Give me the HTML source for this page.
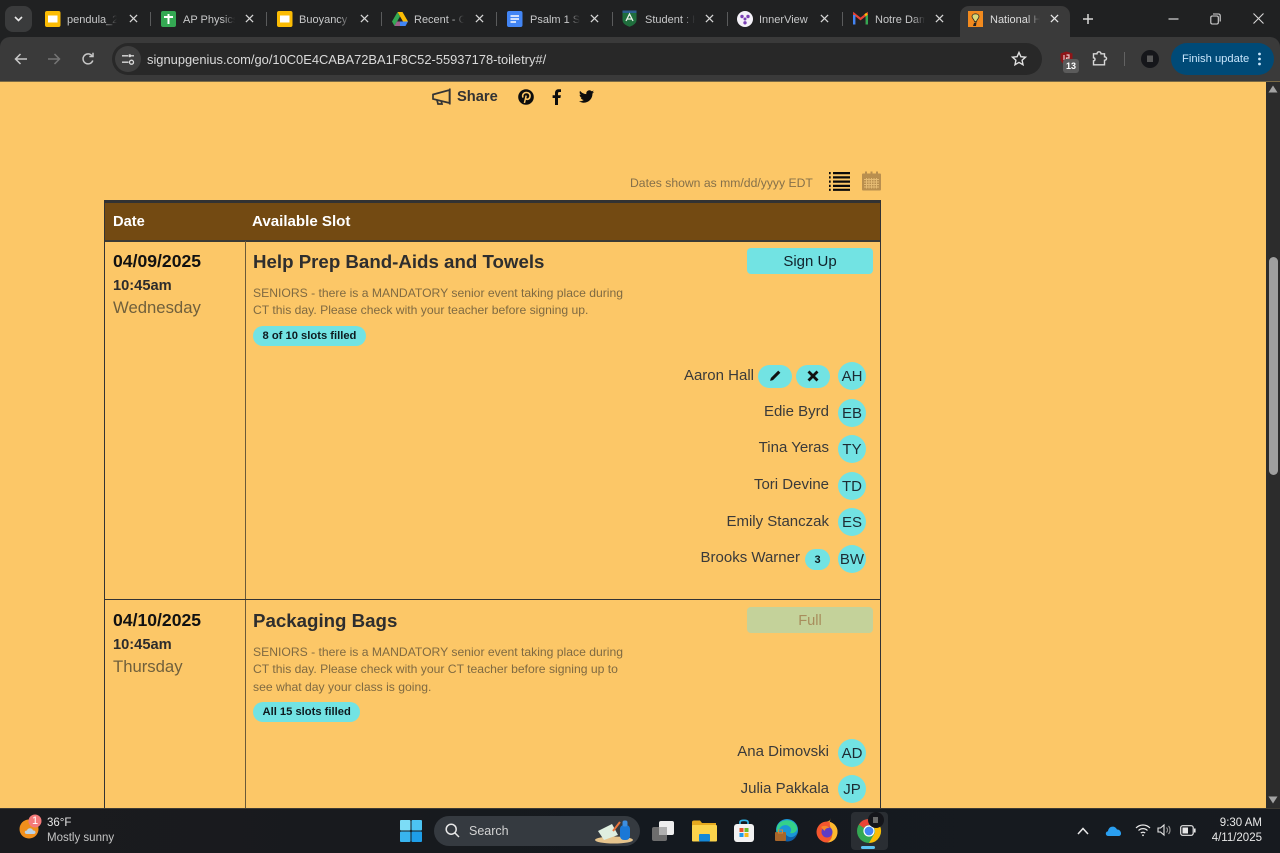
<!DOCTYPE html>
<html lang="en">
<head>
<meta charset="utf-8">
<title>National Honor Society - SignUpGenius</title>
<style>
html,body{margin:0;padding:0;width:1280px;height:853px;overflow:hidden;background:#fcc767;font-family:"Liberation Sans",Arial,sans-serif}
.a{position:absolute;white-space:nowrap}
svg{position:absolute;display:block;overflow:visible}
#top{position:absolute;left:0;top:0;width:1280px;height:50px;background:#202122}
#bar{position:absolute;left:0;top:37px;width:1280px;height:44px;background:#3a3a3a;border-radius:10px 10px 0 0}
#line{position:absolute;left:0;top:81px;width:1280px;height:1px;background:#7a6a45}
.tt{position:absolute;top:12px;font-size:11px;line-height:15px;padding-top:1px;color:#c8c9ca;white-space:nowrap;overflow:hidden;height:16px;-webkit-mask-image:linear-gradient(90deg,#000 75%,transparent 100%)}
.x{position:absolute;top:14px;width:9px;height:9px}
.sep{position:absolute;top:12px;width:1px;height:14px;background:#5a5b5c}
.nm{position:absolute;font-size:15px;line-height:18px;color:#3a3a3a;white-space:nowrap;right:451px}
.av{position:absolute;left:838px;width:28px;height:28px;border-radius:50%;background:#72e3e3;color:#1d2b33;font-size:15px;line-height:30px;text-align:center}
.v{position:absolute;background:#333}
.ddd{font-weight:bold;font-size:17.6px;line-height:22px;color:#111;position:absolute;left:113px}
.tm{font-weight:bold;font-size:14.67px;line-height:18px;color:#2c2c2c;position:absolute;left:113px}
.dy{font-size:16.7px;line-height:22px;color:#70603c;position:absolute;left:113px}
.h{font-weight:bold;font-size:18.7px;line-height:24px;color:#2e2e2e;position:absolute;left:253px;white-space:nowrap}
.d{font-size:12.17px;line-height:17.3px;color:#7f6a42;position:absolute;left:253px;white-space:nowrap}
.pill{position:absolute;left:253px;height:20px;border-radius:10px;background:#72e3e3;color:#0e1a1f;font-weight:bold;font-size:11.2px;line-height:20px;padding:0 9.5px;white-space:nowrap}
</style>
</head>
<body>

<!-- page content -->
<svg style="left:432px;top:88px" width="20" height="18" viewBox="0 0 20 18" fill="none" stroke="#333" stroke-width="1.7"><path d="M1 6.5 L17.5 2 V15 L1 11 Z M17.8 0.5 V16.5"/><path d="M5 12 L6 16 H10 L9.2 12.8"/></svg>
<div class="a" style="left:457px;top:88px;font-weight:bold;font-size:14.67px;line-height:18px;color:#333">Share</div>
<svg style="left:518px;top:89px" width="16" height="16" viewBox="0 0 16 16"><circle cx="8" cy="8" r="7.8" fill="#0d0d0d"/><path d="M6.4 14 L8.2 6.6" stroke="#fcc767" stroke-width="1.5" fill="none"/><path d="M5 8.6 C3.8 5.6 6 3.4 8.5 3.5 C11 3.6 12.4 5.2 12 7.6 C11.6 10.2 9.2 11 7.6 9.6" stroke="#fcc767" stroke-width="1.6" fill="none"/></svg>
<svg style="left:552px;top:89px" width="10" height="16" viewBox="0 0 10 16"><path d="M3 16 V9 H.6 V6.2 H3 V4 C3 1.5 4.500 .2 6.600 .2 H9 V3 H7.400 C6.400 3 6 3.500 6 4.400 V6.200 H8.900 L8.400 9 H6 V16 Z" fill="#0d0d0d"/></svg>
<svg style="left:579px;top:90px" width="15" height="13" viewBox="0 0 24 20"><path d="M24 2.400 C23.100 2.800 22.200 3.100 21.200 3.200 C22.200 2.600 23 1.600 23.400 .4 C22.400 1 21.300 1.400 20.200 1.600 C19.300 .6 18 0 16.600 0 C13.400 0 11.100 3 11.800 6.100 C7.700 5.900 4.100 3.900 1.700 .9 C.4 3.100 1 6 3.200 7.500 C2.400 7.500 1.600 7.300 1 6.900 C.9 9.200 2.600 11.400 5 11.900 C4.300 12.100 3.500 12.100 2.800 12 C3.400 14 5.300 15.400 7.500 15.500 C5.400 17.100 2.700 17.900 0 17.600 C2.200 19 4.900 19.900 7.500 19.900 C16.600 19.900 21.800 12.200 21.500 5.300 C22.500 4.500 23.300 3.500 24 2.400 Z" fill="#0d0d0d"/></svg>

<div class="a" style="left:630px;top:175px;font-size:12.2px;line-height:16px;color:#85704a">Dates shown as mm/dd/yyyy EDT</div>
<svg style="left:829px;top:171px" width="21" height="20" viewBox="0 0 21 20" fill="#0b0b0b"><path d="M0 1h1.700v2.200H0zM4 1h17v2.200H4zM0 5.300h1.700v2.200H0zM4 5.300h17v2.200H4zM0 9.500h1.700v2.200H0zM4 9.500h17v2.200H4zM0 13.800h1.700v2.200H0zM4 13.800h17v2.200H4zM0 17.700h1.700v2.200H0zM4 17.700h17v2.200H4z"/></svg>
<svg style="left:862px;top:171px" width="19" height="20" viewBox="0 0 19 20"><rect x="0" y="2.500" width="19" height="17" rx="1" fill="#b98f4f"/><rect x="3" y="0.500" width="2" height="3.500" fill="#b98f4f"/><rect x="8.500" y="0.500" width="2" height="3.500" fill="#b98f4f"/><rect x="14" y="0.500" width="2" height="3.500" fill="#b98f4f"/><path d="M2 8.500h15M2 11h15M2 13.500h15M2 16h15M4.500 7v10.500M7 7v10.500M9.500 7v10.500M12 7v10.500M14.500 7v10.500" stroke="#e5bb73" stroke-width="1" fill="none"/></svg>

<!-- table -->
<div class="a" style="left:104px;top:200px;width:777px;height:3px;background:#323232"></div>
<div class="a" style="left:105px;top:203px;width:776px;height:37px;background:#734a12"></div>
<div class="a" style="left:104px;top:240px;width:777px;height:2px;background:#3b3a35"></div>
<div class="a" style="left:113px;top:213px;font-weight:bold;font-size:14.67px;line-height:18px;color:#fff">Date</div>
<div class="a" style="left:252px;top:213px;font-weight:bold;font-size:15.1px;line-height:18px;color:#fff">Available Slot</div>
<div class="v" style="left:104px;top:203px;width:1px;height:606px"></div>
<div class="v" style="left:880px;top:203px;width:1px;height:606px"></div>
<div class="v" style="left:245px;top:241px;width:1px;height:568px;background:#6b5a38"></div>
<div class="v" style="left:104px;top:599px;width:777px;height:1px"></div>

<!-- row 1 -->
<div class="ddd" style="top:250px">04/09/2025</div>
<div class="tm" style="top:277px">10:45am</div>
<div class="dy" style="top:297px">Wednesday</div>
<div class="h" style="top:250px">Help Prep Band-Aids and Towels</div>
<div class="d" style="top:285px">SENIORS - there is a MANDATORY senior event taking place during<br>CT this day. Please check with your teacher before signing up.</div>
<div class="pill" style="top:326px">8 of 10 slots filled</div>
<div class="a" style="left:747px;top:248px;width:126px;height:26px;border-radius:4px;background:#72e3e3;color:#11222b;font-size:15px;line-height:28px;text-align:center">Sign Up</div>

<div class="nm" style="top:367px;right:526px">Aaron Hall</div>
<div class="a" style="left:758px;top:365px;width:34px;height:23px;border-radius:12px;background:#72e3e3"></div>
<svg style="left:769px;top:369px" width="13" height="13" viewBox="0 0 12 12"><path d="M1 11 L1.700 8.300 L8.500 1.500 L10.500 3.500 L3.700 10.300 Z" fill="#111"/></svg>
<div class="a" style="left:796px;top:365px;width:34px;height:23px;border-radius:12px;background:#72e3e3"></div>
<svg style="left:807px;top:370px" width="12" height="12" viewBox="0 0 12 12"><path d="M1.500 1.500 L10.500 10.500 M10.500 1.500 L1.500 10.500" stroke="#111" stroke-width="2.800"/></svg>
<div class="av" style="top:362px">AH</div>
<div class="nm" style="top:403px">Edie Byrd</div>
<div class="av" style="top:399px">EB</div>
<div class="nm" style="top:439px">Tina Yeras</div>
<div class="av" style="top:435px">TY</div>
<div class="nm" style="top:476px">Tori Devine</div>
<div class="av" style="top:472px">TD</div>
<div class="nm" style="top:513px">Emily Stanczak</div>
<div class="av" style="top:508px">ES</div>
<div class="nm" style="top:549px;right:480px">Brooks Warner</div>
<div class="a" style="left:805px;top:549px;width:25px;height:21px;border-radius:11px;background:#72e3e3;color:#0e1a1f;font-weight:bold;font-size:11px;line-height:23px;text-align:center">3</div>
<div class="av" style="top:545px">BW</div>

<!-- row 2 -->
<div class="ddd" style="top:609px">04/10/2025</div>
<div class="tm" style="top:636px">10:45am</div>
<div class="dy" style="top:656px">Thursday</div>
<div class="h" style="top:609px">Packaging Bags</div>
<div class="d" style="top:644px">SENIORS - there is a MANDATORY senior event taking place during<br>CT this day. Please check with your CT teacher before signing up to<br>see what day your class is going.</div>
<div class="pill" style="top:702px">All 15 slots filled</div>
<div class="a" style="left:747px;top:607px;width:126px;height:26px;border-radius:4px;background:#c4d29a;color:#a88d5c;font-size:14.67px;line-height:28px;text-align:center">Full</div>
<div class="nm" style="top:743px">Ana Dimovski</div>
<div class="av" style="top:739px">AD</div>
<div class="nm" style="top:780px">Julia Pakkala</div>
<div class="av" style="top:775px">JP</div>

<!-- scrollbar -->
<div class="a" style="left:1266px;top:82px;width:14px;height:727px;background:#2c2c2c"></div>
<svg style="left:1268px;top:85px" width="10" height="8" viewBox="0 0 10 8"><path d="M5 .5 L9.500 7.500 H.5 Z" fill="#a3a3a3"/></svg>
<svg style="left:1268px;top:796px" width="10" height="8" viewBox="0 0 10 8"><path d="M5 7.500 L9.500 .5 H.5 Z" fill="#a3a3a3"/></svg>
<div class="a" style="left:1269px;top:257px;width:9px;height:218px;border-radius:5px;background:#9f9f9f"></div>

<!-- chrome top -->
<div id="top"></div>
<div class="a" style="left:5px;top:6px;width:27px;height:26px;border-radius:8px;background:#3a3b3c"></div>
<svg style="left:14px;top:16px" width="9" height="6" viewBox="0 0 9 6"><path d="M1 1 L4.500 4.500 L8 1" stroke="#e8e8e8" stroke-width="1.600" fill="none"/></svg>

<!-- active tab -->
<div class="a" style="left:960px;top:6px;width:110px;height:32px;background:#3a3a3a;border-radius:9px 9px 0 0"></div>

<!-- tab icons -->
<svg style="left:45px;top:11px" width="16" height="16" viewBox="0 0 16 16"><rect width="15.500" height="16" rx="2" fill="#fbbc04"/><rect x="3" y="4.500" width="9.500" height="7" fill="#fff"/></svg>
<svg style="left:161px;top:11px" width="15" height="16" viewBox="0 0 15 16"><rect width="15" height="16" rx="2" fill="#34a853"/><path d="M3 6h9M7.500 3v10" stroke="#fff" stroke-width="2"/></svg>
<svg style="left:277px;top:11px" width="16" height="16" viewBox="0 0 16 16"><rect width="15.500" height="16" rx="2" fill="#fbbc04"/><rect x="3" y="4.500" width="9.500" height="7" fill="#fff"/></svg>
<svg style="left:392px;top:12px" width="16" height="14" viewBox="0 0 16 14"><path d="M5.500 0 H10.500 L16 9.500 H11 Z" fill="#fbbc04"/><path d="M5.500 0 L0 9.500 L2.500 14 L8 4.500 Z" fill="#34a853"/><path d="M2.500 14 H13.500 L16 9.500 H5 Z" fill="#4285f4"/><path d="M5 9.500 L2.500 14 H8 L8 9.500Z" fill="#ea4335" opacity=".55"/></svg>
<svg style="left:507px;top:11px" width="16" height="16" viewBox="0 0 16 16"><rect width="15.500" height="16" rx="2" fill="#4285f4"/><path d="M3.500 5h8.500M3.500 8h8.500M3.500 11h5.500" stroke="#fff" stroke-width="1.500"/></svg>
<svg style="left:622px;top:10px" width="15" height="17" viewBox="0 0 15 17"><path d="M.5 .5 H14.500 V10 C14.500 13.500 11 15.500 7.500 16.800 C4 15.500 .5 13.500 .5 10 Z" fill="#1f6e3d"/><path d="M.5 .5 H14.500 V3 H.5Z" fill="#2c5e8e"/><path d="M4 11 L7.500 4 L11 11 M5.500 9 H9.500" stroke="#e8f0e8" stroke-width="1.300" fill="none"/></svg>
<svg style="left:737px;top:11px" width="16" height="16" viewBox="0 0 16 16"><circle cx="8" cy="8" r="8" fill="#f4f1f8"/><circle cx="5" cy="5.500" r="1.700" fill="#7a3fb5"/><circle cx="11" cy="5.500" r="1.700" fill="#7a3fb5"/><circle cx="8" cy="8" r="1.500" fill="#7a3fb5"/><circle cx="8" cy="11.800" r="1.700" fill="#7a3fb5"/></svg>
<svg style="left:853px;top:12px" width="15" height="13" viewBox="0 0 15 13" fill="none"><path d="M1.200 12.500 V2 L7.500 7 L13.800 2 V12.500" stroke="#ea4335" stroke-width="2.200"/><path d="M1.200 3 V12.500" stroke="#4285f4" stroke-width="2.400"/><path d="M13.800 3 V12.500" stroke="#34a853" stroke-width="2.400"/><path d="M12 3.300 L14 1.700" stroke="#fbbc04" stroke-width="2.400"/></svg>
<svg style="left:968px;top:11px" width="15" height="16" viewBox="0 0 15 16"><rect width="15" height="16" fill="#f28a1e"/><path d="M4 5.500 C4 2 11 2 11 5.500 C11 7.500 9 8 8.500 10.500 H6.500 C6 8 4 7.500 4 5.500 Z" fill="#d9d97a" stroke="#222" stroke-width=".8"/><path d="M6 12 L5 15 H8 L8.500 11" fill="#222"/></svg>

<!-- tab titles -->
<div class="tt" style="left:67px;width:50px">pendula_2025</div>
<div class="tt" style="left:183px;width:52px">AP Physics 1</div>
<div class="tt" style="left:299px;width:52px">Buoyancy Lab</div>
<div class="tt" style="left:414px;width:50px">Recent - Google</div>
<div class="tt" style="left:530px;width:50px">Psalm 1 Study</div>
<div class="tt" style="left:645px;width:50px">Student : Home</div>
<div class="tt" style="left:759px;width:54px;-webkit-mask-image:none">InnerView</div>
<div class="tt" style="left:875px;width:50px">Notre Dame</div>
<div class="tt" style="left:990px;width:50px;color:#dcdcdc">National Honor</div>

<!-- tab close buttons -->
<svg class="x" style="left:129px" viewBox="0 0 10 10"><path d="M1 1 L9 9 M9 1 L1 9" stroke="#d6d6d6" stroke-width="1.400"/></svg>
<svg class="x" style="left:245px" viewBox="0 0 10 10"><path d="M1 1 L9 9 M9 1 L1 9" stroke="#d6d6d6" stroke-width="1.400"/></svg>
<svg class="x" style="left:360px" viewBox="0 0 10 10"><path d="M1 1 L9 9 M9 1 L1 9" stroke="#d6d6d6" stroke-width="1.400"/></svg>
<svg class="x" style="left:475px" viewBox="0 0 10 10"><path d="M1 1 L9 9 M9 1 L1 9" stroke="#d6d6d6" stroke-width="1.400"/></svg>
<svg class="x" style="left:590px" viewBox="0 0 10 10"><path d="M1 1 L9 9 M9 1 L1 9" stroke="#d6d6d6" stroke-width="1.400"/></svg>
<svg class="x" style="left:705px" viewBox="0 0 10 10"><path d="M1 1 L9 9 M9 1 L1 9" stroke="#d6d6d6" stroke-width="1.400"/></svg>
<svg class="x" style="left:820px" viewBox="0 0 10 10"><path d="M1 1 L9 9 M9 1 L1 9" stroke="#d6d6d6" stroke-width="1.400"/></svg>
<svg class="x" style="left:935px" viewBox="0 0 10 10"><path d="M1 1 L9 9 M9 1 L1 9" stroke="#d6d6d6" stroke-width="1.400"/></svg>
<svg class="x" style="left:1050px" viewBox="0 0 10 10"><path d="M1 1 L9 9 M9 1 L1 9" stroke="#e8e8e8" stroke-width="1.400"/></svg>

<!-- tab separators -->
<div class="sep" style="left:150px"></div>
<div class="sep" style="left:266px"></div>
<div class="sep" style="left:381px"></div>
<div class="sep" style="left:496px"></div>
<div class="sep" style="left:612px"></div>
<div class="sep" style="left:727px"></div>
<div class="sep" style="left:842px"></div>

<!-- new tab, window controls -->
<svg style="left:1082px;top:13px" width="12" height="12" viewBox="0 0 12 12"><path d="M6 1 V11 M1 6 H11" stroke="#d8d8d8" stroke-width="1.500"/></svg>
<svg style="left:1168px;top:18px" width="11" height="2" viewBox="0 0 11 2"><path d="M.5 1 H10.500" stroke="#d8d8d8" stroke-width="1.200"/></svg>
<svg style="left:1210px;top:13px" width="11" height="12" viewBox="0 0 11 12" fill="none" stroke="#d8d8d8" stroke-width="1.100"><rect x=".8" y="3" width="7.500" height="8" rx="1.500"/><path d="M3 1 H8.500 C9.500 1 10.200 1.700 10.200 2.700 V8.500"/></svg>
<svg style="left:1253px;top:13px" width="11" height="11" viewBox="0 0 11 11"><path d="M.5 .5 L10.500 10.500 M10.500 .5 L.5 10.500" stroke="#d8d8d8" stroke-width="1.100"/></svg>

<!-- toolbar -->
<div id="bar"></div>
<div class="a" style="left:960px;top:36px;width:110px;height:3px;background:#3a3a3a"></div>
<div id="line"></div>
<svg style="left:14px;top:52px" width="14" height="14" viewBox="0 0 14 14" fill="none" stroke="#c8c8c8" stroke-width="1.500"><path d="M13 7 H1.500 M6.500 2 L1.500 7 L6.500 12"/></svg>
<svg style="left:47px;top:52px" width="14" height="14" viewBox="0 0 14 14" fill="none" stroke="#757575" stroke-width="1.500"><path d="M1 7 H12.500 M7.500 2 L12.500 7 L7.500 12"/></svg>
<svg style="left:81px;top:52px" width="14" height="14" viewBox="0 0 14 14" fill="none" stroke="#c8c8c8" stroke-width="1.500"><path d="M11.800 8.500 A5 5 0 1 1 11 3.800"/><path d="M12 .8 V4.500 H8.300" /></svg>

<div class="a" style="left:112px;top:43px;width:930px;height:32px;border-radius:16px;background:#282828"></div>
<div class="a" style="left:115px;top:46px;width:26px;height:26px;border-radius:13px;background:#3f3f3f"></div>
<svg style="left:121px;top:52px" width="14" height="14" viewBox="0 0 14 14" fill="none" stroke="#dcdcdc" stroke-width="1.300"><path d="M1 3.800 H7 M1 10.200 H7.500"/><path d="M10 3.800 H13"/><circle cx="10.500" cy="10.200" r="2"/><rect x="7.500" y="2.300" width="2.500" height="3" rx="1" fill="#dcdcdc" stroke="none"/></svg>
<div class="a" style="left:147px;top:51px;font-size:12.9px;line-height:18px;color:#dadada">signupgenius.com/go/10C0E4CABA72BA1F8C52-55937178-toiletry#/</div>
<svg style="left:1011px;top:51px" width="16" height="15" viewBox="0 0 16 15"><path d="M8 1.500 L9.900 5.700 L14.500 6.200 L11.100 9.200 L12 13.700 L8 11.400 L4 13.700 L4.900 9.200 L1.500 6.200 L6.100 5.700 Z" fill="none" stroke="#e0e0e0" stroke-width="1.400"/></svg>

<svg style="left:1060px;top:51px" width="13" height="15" viewBox="0 0 13 15"><path d="M6.500 .5 L12.500 2.500 V8 C12.500 11 9.500 13.500 6.500 14.500 C3.500 13.500 .5 11 .5 8 V2.500 Z" fill="#8e1518"/><path d="M4 4 V9 M6.500 4 H9 V7 H6.500 V9" stroke="#e9cccc" stroke-width="1.200" fill="none"/></svg>
<div class="a" style="left:1063px;top:59px;width:16px;height:14px;border-radius:3px;background:#5b5b5b;color:#fff;font-weight:bold;font-size:9px;line-height:14px;text-align:center">13</div>
<svg style="left:1092px;top:50px" width="16" height="16" viewBox="0 0 16 16" fill="none" stroke="#d8d8d8" stroke-width="1.400"><path d="M1.500 3.500 H5 C5 .8 9 .8 9 3.500 H12.500 V6.500 C15.200 6.500 15.200 10 12.500 10 V14.500 H1.500 V10.500 C3.500 10.500 3.500 7.500 1.500 7.500 Z" transform="translate(0 .3)"/></svg>
<div class="a" style="left:1124px;top:52px;width:1px;height:14px;background:#626262"></div>
<svg style="left:1141px;top:50px" width="18" height="18" viewBox="0 0 18 18"><circle cx="9" cy="9" r="9" fill="#15161a"/><rect x="6" y="5.500" width="6" height="6.500" fill="#575757"/></svg>
<div class="a" style="left:1171px;top:43px;width:103px;height:32px;border-radius:16px;background:#004a77"></div>
<div class="a" style="left:1182px;top:51px;font-size:11.2px;line-height:16px;color:#c9e6fc">Finish update</div>
<svg style="left:1257px;top:52px" width="5" height="14" viewBox="0 0 5 14" fill="#c9e6fc"><circle cx="2.500" cy="2" r="1.400"/><circle cx="2.500" cy="7" r="1.400"/><circle cx="2.500" cy="12" r="1.400"/></svg>

<!-- taskbar -->
<div class="a" style="left:0;top:808px;width:1280px;height:1px;background:#3d3a33"></div>
<div class="a" style="left:0;top:809px;width:1280px;height:44px;background:linear-gradient(90deg,#1a1b1e 0%,#181a1e 30%,#14191f 50%,#171a1f 100%)"></div>

<svg style="left:18px;top:813px" width="24" height="26" viewBox="0 0 24 26"><circle cx="11" cy="16" r="9.500" fill="#f08f1c"/><path d="M9 21 C6 21 6 17.500 9 17.500 C9.500 14.500 14.500 14.500 15 17.500 C18 17 18.500 21 15.500 21 Z" fill="#bcd3e6"/><circle cx="17" cy="8" r="6.500" fill="#f47a7a"/></svg>
<div class="a" style="left:26px;top:814px;width:18px;font-size:11px;line-height:14px;color:#fff;text-align:center">1</div>
<div class="a" style="left:47px;top:816px;font-size:11.5px;line-height:14px;color:#e6e6e6">36°F</div>
<div class="a" style="left:47px;top:831px;font-size:11.500px;line-height:14px;color:#c4c4c4">Mostly sunny</div>

<svg style="left:400px;top:820px" width="22" height="22" viewBox="0 0 22 22"><rect x="0" y="0" width="10.500" height="10.500" rx="1" fill="#7cdcf6"/><rect x="11.500" y="0" width="10.500" height="10.500" rx="1" fill="#4cc4f2"/><rect x="0" y="11.500" width="10.500" height="10.500" rx="1" fill="#38b4ee"/><rect x="11.500" y="11.500" width="10.500" height="10.500" rx="1" fill="#1e9ee8"/></svg>

<div class="a" style="left:434px;top:816px;width:206px;height:30px;border-radius:15px;background:#353a40"></div>
<svg style="left:445px;top:823px" width="15" height="15" viewBox="0 0 15 15" fill="none" stroke="#e8e8e8" stroke-width="1.500"><circle cx="6.200" cy="6.200" r="5"/><path d="M10 10 L14 14"/></svg>
<div class="a" style="left:469px;top:823px;font-size:12.500px;line-height:16px;color:#d2d2d2">Search</div>
<svg style="left:594px;top:819px" width="44" height="25" viewBox="0 0 44 25"><ellipse cx="20" cy="21" rx="19" ry="3.500" fill="#e6c48c"/><path d="M4 12 L18 5 L24 16 L10 21 Z" fill="#dfeee0"/><path d="M19 12 L26 3" stroke="#e8743c" stroke-width="2"/><rect x="26" y="6" width="10" height="15" rx="4" fill="#1b78d6"/><rect x="28.500" y="1.500" width="5" height="6" rx="2" fill="#3d8ee0"/></svg>

<!-- taskbar icons -->
<svg style="left:651px;top:820px" width="24" height="22" viewBox="0 0 24 22"><rect x="1" y="7" width="15" height="14" rx="2" fill="#6d6d6d"/><rect x="8" y="1" width="15" height="14" rx="2" fill="#eeeeee"/><rect x="8" y="7" width="8" height="8" fill="#b0b0b0"/></svg>
<svg style="left:692px;top:820px" width="25" height="22" viewBox="0 0 25 22"><path d="M0 2 C0 1 1 .5 2 .5 H8 L10 3 H24 V21 H0 Z" fill="#e5a91e"/><rect x="0" y="5" width="25" height="16.500" rx="1" fill="#fbd34b"/><rect x="7" y="14" width="11" height="7.500" rx="1" fill="#1488d8"/></svg>
<svg style="left:734px;top:819px" width="20" height="24" viewBox="0 0 20 24"><path d="M6 6 V3 C6 .8 14 .8 14 3 V6" stroke="#2fb4e8" stroke-width="1.600" fill="none"/><rect x="0" y="5" width="20" height="18" rx="3" fill="#f2f2f2"/><rect x="5.500" y="9" width="4" height="4" fill="#e8502a"/><rect x="10.500" y="9" width="4" height="4" fill="#6cbb2c"/><rect x="5.500" y="14" width="4" height="4" fill="#1f9cec"/><rect x="10.500" y="14" width="4" height="4" fill="#f8bb18"/></svg>
<svg style="left:775px;top:819px" width="24" height="24" viewBox="0 0 24 24"><circle cx="12" cy="11" r="11" fill="#1a96d8"/><path d="M2 8 C4 0 18 -2 22 8 C23 12 19 15 15 14 C19 9 12 4 7 7 C4 9 3 12 4 16 C1.500 14 1.500 10 2 8 Z" fill="#34d08a"/><path d="M10 14 C13 20 20 19 22 14 C22 19 16 24 10 22 Z" fill="#0f5fa8"/><rect x="0" y="13" width="11" height="9" rx="1" fill="#a8662a"/><rect x="3.500" y="11" width="4" height="3" fill="none" stroke="#c98a45"/></svg>
<svg style="left:816px;top:818px" width="22" height="25" viewBox="0 0 22 25"><circle cx="11" cy="14" r="10.500" fill="#f4562e"/><path d="M11 3.500 C20 4 23 12 21 17 C20 22 15 24.500 11 24.500 C16 23 18 15 14.500 10 C14 7 13 4 15 .5 C15 2 13 3 11 3.500 Z" fill="#fdb92f"/><circle cx="11" cy="14" r="5.500" fill="#5e3cc4"/><path d="M5 9 C8 7 12 8 14 10 C11 9.500 9 11 8.500 13 Z" fill="#f8872a"/></svg>
<div class="a" style="left:851px;top:812px;width:37px;height:38px;border-radius:4px;background:#2a2e33"></div>
<svg style="left:857px;top:819px" width="24" height="24" viewBox="0 0 24 24"><circle cx="12" cy="12" r="12" fill="#34a853"/><path d="M12 0 A12 12 0 0 1 22.400 6 H12 A6 6 0 0 0 6.800 9 L1.900 5.500 A12 12 0 0 1 12 0 Z" fill="#ea4335"/><path d="M22.400 6 A12 12 0 0 1 12 24 L17.200 15 A6 6 0 0 0 17.200 9 L12 6 Z" fill="#fbbc04"/><circle cx="12" cy="12" r="5.600" fill="#fff"/><circle cx="12" cy="12" r="4.400" fill="#4285f4"/></svg>
<div class="a" style="left:868px;top:812px;width:16px;height:16px;border-radius:50%;background:#14151a"></div>
<div class="a" style="left:873px;top:817px;width:5px;height:6px;background:#6a6a6a"></div>
<div class="a" style="left:861px;top:846px;width:14px;height:3px;border-radius:2px;background:#5cc4f2"></div>

<!-- tray -->
<svg style="left:1077px;top:827px" width="12" height="8" viewBox="0 0 12 8"><path d="M1 7 L6 1.500 L11 7" stroke="#e8e8e8" stroke-width="1.500" fill="none"/></svg>
<svg style="left:1105px;top:825px" width="17" height="11" viewBox="0 0 17 11"><path d="M3.500 11 C0 11 0 6.500 3 6.200 C3.500 1 10 0 12 4.500 C16 4 18 11 13.500 11 Z" fill="#2a9ff0"/></svg>
<svg style="left:1135px;top:823px" width="16" height="14" viewBox="0 0 16 14" fill="none" stroke="#e8e8e8" stroke-width="1.200"><path d="M1 5 C5 1 11 1 15 5 M3.500 7.500 C6 5 10 5 12.500 7.500 M5.800 10 C7 9 9 9 10.200 10"/><circle cx="8" cy="12.300" r=".9" fill="#e8e8e8" stroke="none"/></svg>
<svg style="left:1157px;top:823px" width="16" height="14" viewBox="0 0 16 14" fill="none" stroke="#e8e8e8" stroke-width="1.100"><path d="M1 5 H3.500 L7 2 V12 L3.500 9 H1 Z"/><path d="M9.500 4.500 C10.800 6 10.800 8 9.500 9.500 M11.500 3 C13.500 5 13.500 9 11.500 11" stroke="#999"/></svg>
<svg style="left:1180px;top:825px" width="16" height="11" viewBox="0 0 16 11"><rect x=".7" y=".7" width="12.500" height="9.600" rx="2" fill="none" stroke="#e8e8e8" stroke-width="1.200"/><rect x="2.500" y="2.500" width="5.500" height="6" fill="#e8e8e8"/><rect x="14" y="3.500" width="1.600" height="4" fill="#e8e8e8"/></svg>
<div class="a" style="right:18px;top:816px;font-size:11.500px;line-height:14px;color:#e8e8e8;text-align:right">9:30 AM</div>
<div class="a" style="right:18px;top:831px;font-size:11.500px;line-height:14px;color:#e8e8e8;text-align:right">4/11/2025</div>

</body>
</html>
